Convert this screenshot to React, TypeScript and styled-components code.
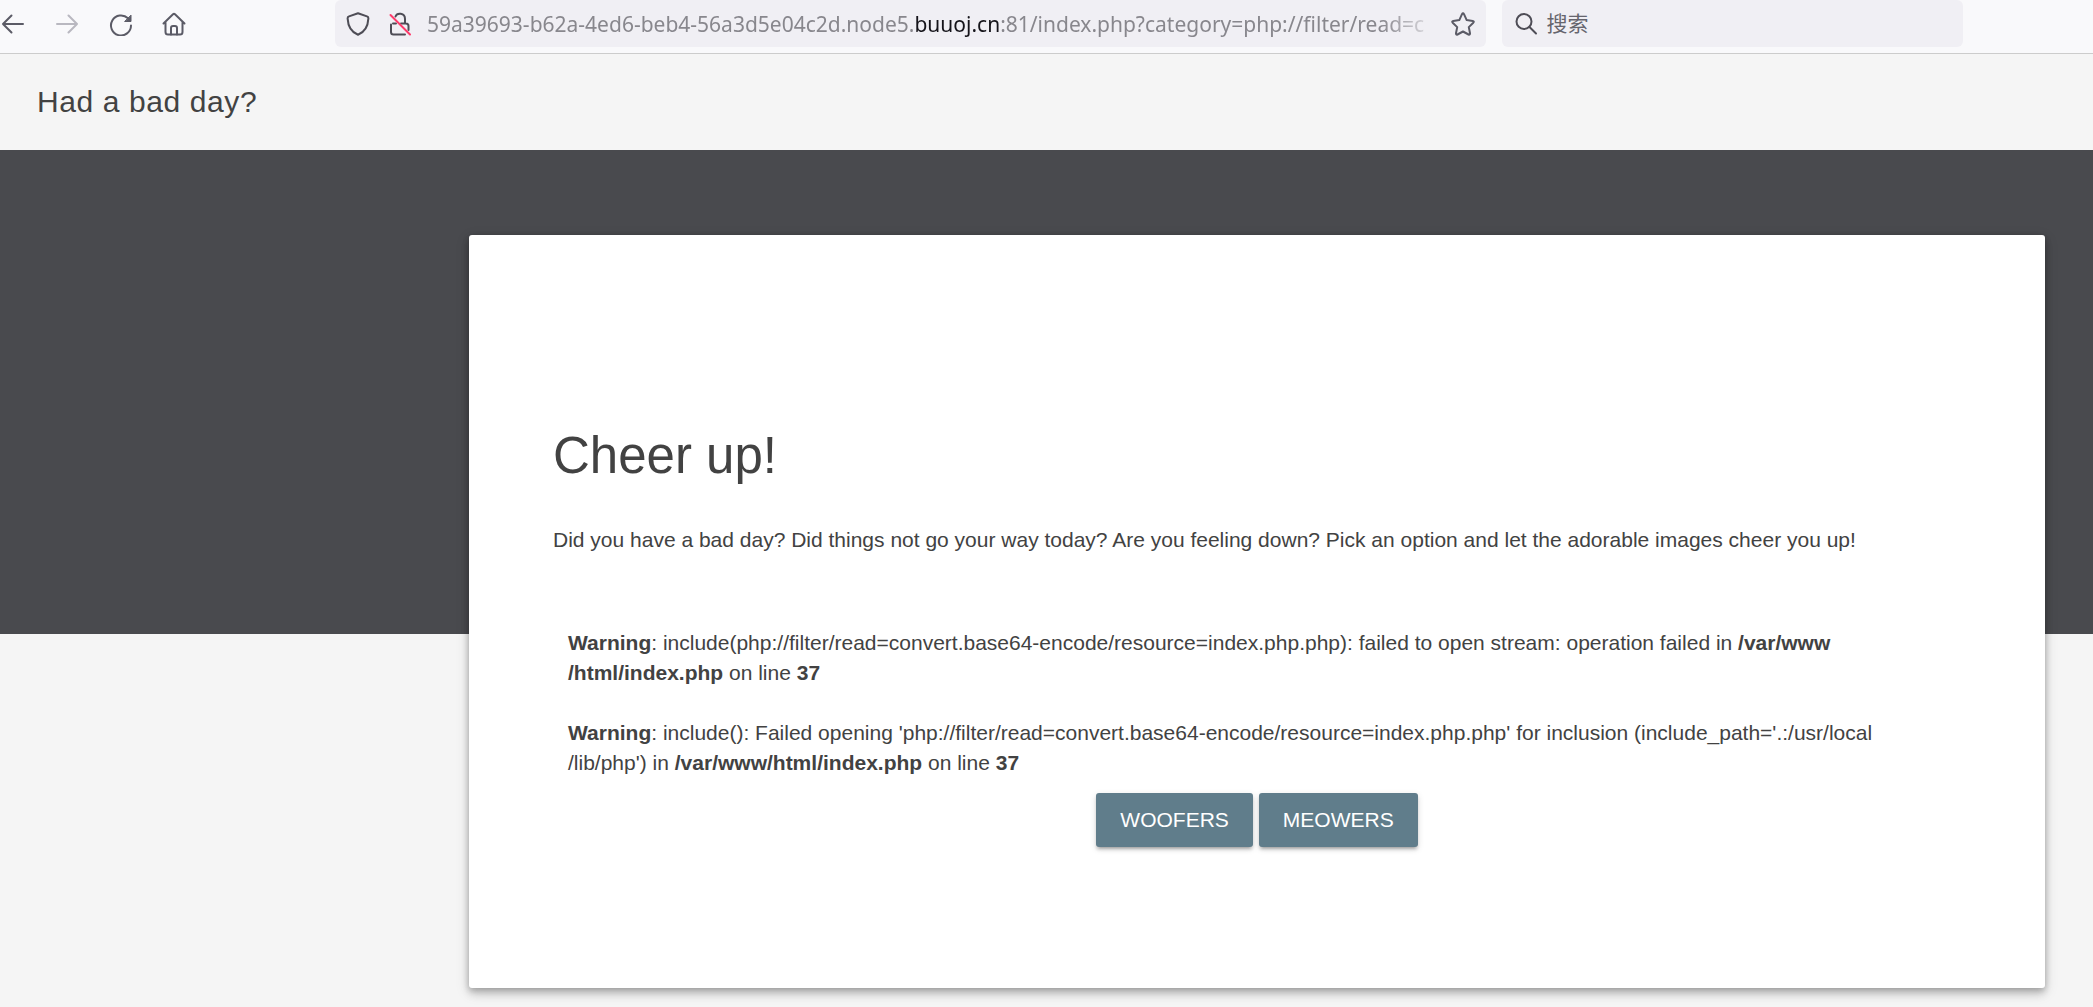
import React from 'react';
import styled, { createGlobalStyle } from 'styled-components';

const GlobalStyle = createGlobalStyle`
  *, *::before, *::after { box-sizing: border-box; }
  html, body, #root { min-height: 100vh; }
  body {
    margin: 0;
    background: #f5f5f5;
    color: #424242;
    font-family: "Liberation Sans", Arial, sans-serif;
    font-size: 21px;
    line-height: 30px;
  }
`;

const Page = styled.div`
  display: flex;
  flex-direction: column;
  min-height: 100vh;
`;

const Toolbar = styled.div`
  display: flex;
  height: 54px;
  padding: 0 130px 6px 0;
  background: #f9f9fb;
  border-bottom: 1px solid #cccccc;
  font-family: "Noto Sans", "Noto Sans CJK SC", sans-serif;
`;

const Nav = styled.nav`
  display: flex;
  flex: 0 0 335px;
  align-items: center;
  gap: 30px;
`;

const Fields = styled.div`
  display: grid;
  flex: 1;
  grid-template-columns: minmax(0, 5fr) minmax(0, 2fr);
  gap: 16px;
  min-width: 0;
`;

const IconButton = styled.button`
  display: flex;
  flex: none;
  padding: 0;
  border: 0;
  background: none;
  color: #5b5b66;

  &:disabled { color: #b9b8c0; }
`;

const Icon = styled.svg`
  display: block;
  flex: none;
  width: 24px;
  height: 24px;
  fill: none;
  stroke: currentColor;
  stroke-width: 2;
  stroke-linecap: round;
  stroke-linejoin: round;
`;

const Field = styled.div`
  display: flex;
  align-items: center;
  min-width: 0;
  border-radius: 6px;
  background: #f0eff4;
  color: #4e4d56;
`;

const AddressField = styled(Field)`
  gap: 18px;
  padding: 0 11px;
`;

const SearchField = styled(Field)`
  gap: 8px;
  padding: 0 12px;
`;

const Address = styled.div`
  flex: 1;
  min-width: 0;
  margin: 0 -8px 0 -3px;
  overflow: hidden;
  outline: 0;
  white-space: nowrap;
  color: #88878d;
  font-size: 21px;
  line-height: 30px;
  mask-image: linear-gradient(to left, transparent, #000 60px);
`;

const Domain = styled.span`
  color: #15141a;
`;

const SearchInput = styled.input`
  flex: 1;
  min-width: 0;
  padding: 0 0 3px;
  border: 0;
  outline: 0;
  background: none;
  color: #15141a;
  font: inherit;
  font-family: "Noto Sans CJK SC", sans-serif;

  &::placeholder { color: #66656d; opacity: 1; }
`;

const Header = styled.header`
  display: flex;
  align-items: center;
  height: 96px;
  padding: 0 37px;
`;

const Title = styled.span`
  font-size: 30px;
  letter-spacing: 0.02em;
`;

const Ribbon = styled.div`
  height: 484px;
  background: #494a4e;
`;

const Main = styled.main`
  display: grid;
  grid-template-columns: 421fr 1576fr;
  margin-top: -399px;
  padding: 0 48px 19px;
`;

const Card = styled.section`
  grid-column: 2;
  padding: 120px 84px;
  border-radius: 3px;
  background: #fff;
  box-shadow:
    0 6px 8px rgba(0, 0, 0, 0.14),
    0 4px 15px rgba(0, 0, 0, 0.12),
    0 2px 6px rgba(0, 0, 0, 0.2);
`;

const Heading = styled.h3`
  margin: 71px 0 36px;
  font-size: 51px;
  font-weight: 400;
  line-height: 60px;
`;

const Lead = styled.p`
  margin: 0 0 70px;
  line-height: 36px;
`;

const Output = styled.div`
  padding: 0 15px;
`;

const Warning = styled.p`
  margin: 0 0 30px;

  &:last-of-type { margin-bottom: 15px; }
`;

const Unbroken = styled.span`
  white-space: nowrap;
`;

const Actions = styled.form`
  display: flex;
  justify-content: center;
  gap: 6px;
  margin-bottom: 21px;
`;

const ActionButton = styled.button`
  height: 54px;
  padding: 0 24px;
  border: 0;
  border-radius: 3px;
  background: #607d8b;
  box-shadow:
    0 3px 3px rgba(0, 0, 0, 0.14),
    0 4px 2px -3px rgba(0, 0, 0, 0.2),
    0 2px 7px rgba(0, 0, 0, 0.12);
  color: #fff;
  font: inherit;
  text-transform: uppercase;
`;

const BackIcon = () => (
  <Icon viewBox="0 0 24 24"><path d="M23 12H3M11.500 3.500L3 12l8.500 8.500" /></Icon>
);

const ForwardIcon = () => (
  <Icon viewBox="0 0 24 24"><path d="M3 12h20M14.500 3.500L23 12l-8.500 8.500" /></Icon>
);

const ReloadIcon = () => (
  <Icon viewBox="0 0 24 24">
    <path d="M20 6.300A10 10 0 1 0 23 13.500" />
    <path d="M23 3.500v6h-6z" fill="currentColor" strokeWidth="1" />
  </Icon>
);

const HomeIcon = () => (
  <Icon viewBox="0 0 24 24">
    <path d="M1.500 11.500L11 2.300q1-.900 2 0l9.500 9.200M3.500 10v10q0 2.500 2.500 2.500h12q2.500 0 2.500-2.500V10" />
    <path d="M9 22.500V16q0-2 2-2h2q2 0 2 2v6.500" />
  </Icon>
);

const ShieldIcon = () => (
  <Icon viewBox="0 0 24 24">
    <path d="M12 1.200L21 4.400q1.500.500 1.400 2C22 14 19 20 12 22.800C5 20 2 14 1.600 6.400q-.100-1.500 1.400-2z" />
  </Icon>
);

const InsecureIcon = () => (
  <Icon viewBox="0 0 24 24">
    <path d="M3 12.500V20q0 2.500 2.500 2.500H17M8 11.500H5M7.500 4.500C9 .500 17 .500 17 7v4.500h1q2.500 0 2.500 2.500v4M13 11.500h4" />
    <path d="M2.500 3L22 22.500" stroke="#ff3b6b" />
  </Icon>
);

const StarIcon = () => (
  <Icon viewBox="0 0 24 24">
    <path d="M11 2.200q1-1.900 2 0l2.700 5.900l6 .800q1.800.400.600 1.800l-4.500 4.400l1.200 6.200q.100 1.900-1.500 1.200L12 19.500l-5.500 3q-1.600.700-1.500-1.200l1.200-6.200l-4.500-4.400q-1.200-1.400.600-1.800l6-.800z" />
  </Icon>
);

const SearchIcon = () => (
  <Icon viewBox="0 0 24 24">
    <circle cx="10" cy="9.500" r="7.500" />
    <path d="M15.500 15l6.500 6.500" />
  </Icon>
);

const BrowserToolbar = () => (
  <Toolbar>
    <Nav aria-label="Browser">
      <IconButton aria-label="Back"><BackIcon /></IconButton>
      <IconButton aria-label="Forward" disabled><ForwardIcon /></IconButton>
      <IconButton aria-label="Reload"><ReloadIcon /></IconButton>
      <IconButton aria-label="Home"><HomeIcon /></IconButton>
    </Nav>
    <Fields>
      <AddressField>
        <ShieldIcon />
        <InsecureIcon />
        <Address role="textbox" aria-label="Address" contentEditable suppressContentEditableWarning spellCheck={false}>
          59a39693-b62a-4ed6-beb4-56a3d5e04c2d.node5.<Domain>buuoj.cn</Domain>
          :81/index.php?category=php://filter/read=c
        </Address>
        <IconButton aria-label="Bookmark"><StarIcon /></IconButton>
      </AddressField>
      <SearchField>
        <SearchIcon />
        <SearchInput aria-label="搜索" placeholder="搜索" />
      </SearchField>
    </Fields>
  </Toolbar>
);

export default function App() {
  return (
    <Page>
      <GlobalStyle />
      <BrowserToolbar />
      <Header><Title>Had a bad day?</Title></Header>
      <Ribbon />
      <Main>
        <Card>
          <Heading>Cheer up!</Heading>
          <Lead>
            Did you have a bad day? Did things not go your way today? Are you feeling down? Pick an option and let
            the adorable images cheer you up!
          </Lead>
          <Output>
            <Warning>
              <b>Warning</b>: include(php://filter/read=convert.base64-encode/resource=index.php.php): failed to open
              stream: operation failed in <b>/var/www<wbr /><Unbroken>/html/index.php</Unbroken></b> on line <b>37</b>
            </Warning>
            <Warning>
              <b>Warning</b>: include(): Failed opening
              'php://filter/read=convert.base64-encode/resource=index.php.php' for inclusion
              (include_path='.:/usr/local<wbr /><Unbroken>/lib/php')</Unbroken> in{' '}
              <b>/var/www/html/index.php</b> on line <b>37</b>
            </Warning>
            <Actions onSubmit={(e) => e.preventDefault()}>
              <ActionButton type="submit">Woofers</ActionButton>
              <ActionButton type="submit">Meowers</ActionButton>
            </Actions>
          </Output>
        </Card>
      </Main>
    </Page>
  );
}
